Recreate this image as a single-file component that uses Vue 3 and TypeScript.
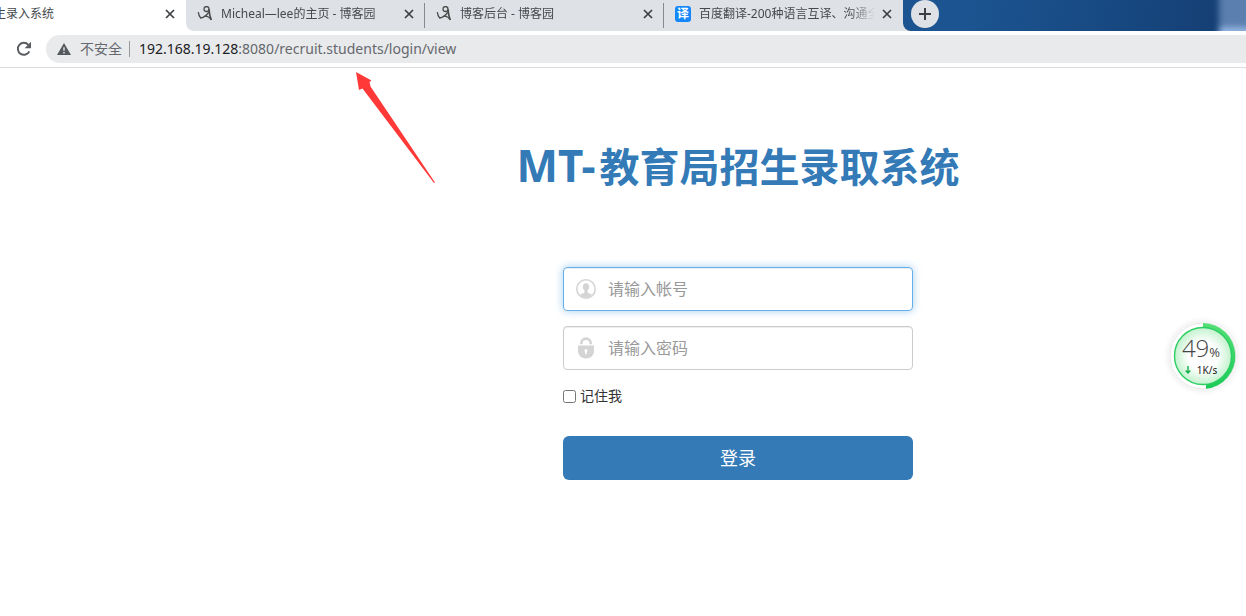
<script setup lang="ts">
import { ref } from 'vue'

interface Tab {
  title: string
  icon: 'blog' | 'translate'
}

const tabs: Tab[] = [
  { title: 'Micheal—lee的主页 - 博客园', icon: 'blog' },
  { title: '博客后台 - 博客园', icon: 'blog' },
  { title: '百度翻译-200种语言互译、沟通全', icon: 'translate' },
]

const account = ref('')
const password = ref('')
const remember = ref(false)
</script>

<template>
  <div class="window">
    <header class="browser">
      <div class="strip">
        <div class="tab active">
          <span class="active-title">生录入系统</span>
          <button class="close" type="button" aria-label="关闭">
            <svg viewBox="0 0 10 10" width="10" height="10"><path d="M1 1l8 8M9 1l-8 8" stroke="#3c4043" stroke-width="1.7" /></svg>
          </button>
        </div>
        <div class="inactive-tabs">
          <div v-for="tab in tabs" :key="tab.title" class="tab">
            <svg v-if="tab.icon === 'blog'" class="favicon" viewBox="0 0 16 16" width="16" height="16" fill="none" stroke="#4a4a4a">
              <circle cx="9.500" cy="3" r="2.500" stroke-width="1.300" />
              <path d="M1.300 6.200c.3 2.500 1 4.500 2.400 5.800 3.200-.6 6-2.800 8.300-6.200" stroke-width="1.300" />
              <path d="M12 3.200c.2 4 1 7.500 2.300 10.800" stroke-width="1.700" />
              <path d="M7.500 10.300c2.500-.6 4.500.4 6.500 3.200" stroke-width="1.100" />
            </svg>
            <span v-else class="translate">译</span>
            <span class="tab-title">{{ tab.title }}</span>
            <button class="close" type="button" aria-label="关闭">
              <svg viewBox="0 0 10 10" width="10" height="10"><path d="M1 1l8 8M9 1l-8 8" stroke="#3c4043" stroke-width="1.7" /></svg>
            </button>
          </div>
        </div>
        <div class="desk">
          <button class="new-tab" type="button" aria-label="新标签页">
            <svg viewBox="0 0 12 12" width="12" height="12"><path d="M6 0v12M0 6h12" stroke="#3c4043" stroke-width="2" /></svg>
          </button>
        </div>
        <span class="glass"></span>
      </div>
      <div class="toolbar">
        <button class="reload" type="button" aria-label="重新加载">
          <svg viewBox="0 0 16 16" width="16" height="16">
            <path d="M13.300 10.300A6 6 0 1 1 12.400 3.900" fill="none" stroke="#5a5d61" stroke-width="2" />
            <path d="M15 .8v6.400H8.600z" fill="#5a5d61" />
          </svg>
        </button>
        <div class="address">
          <svg class="warning" viewBox="0 0 14 12" width="14" height="12">
            <path d="M7 0l7 12H0z" fill="#55585c" />
            <path d="M7 4.200v3.600M7 8.900v1.500" stroke="#e9eaec" stroke-width="1.400" />
          </svg>
          <span class="insecure">不安全</span>
          <span class="divider"></span>
          <span class="url"><b>192.168.19.128</b>:8080/recruit.students/login/view</span>
        </div>
      </div>
    </header>

    <main class="page">
      <h1><span class="latin">MT-</span>教育局招生录取系统</h1>
      <form class="login" @submit.prevent>
        <label class="field focused">
          <svg viewBox="0 0 20 20" width="20" height="20">
            <circle cx="10" cy="10" r="9.200" fill="none" stroke="#d4d4d4" stroke-width="1.600" />
            <path d="M10 4.200c-2 0-3.200 1.400-3.200 3.400 0 1.800.7 3 1.600 3.800v2c-.8 1-3 1.200-4.500 2.300A8.500 8.500 0 0 0 10 18.500a8.500 8.500 0 0 0 6.100-2.800c-1.500-1.100-3.700-1.300-4.500-2.300v-2c.9-.8 1.600-2 1.600-3.800 0-2-1.200-3.400-3.200-3.400z" fill="#d4d4d4" />
          </svg>
          <input v-model="account" type="text" placeholder="请输入帐号" aria-label="帐号" />
        </label>
        <label class="field">
          <svg viewBox="0 0 20 22" width="20" height="22">
            <path d="M5.300 7.300V6.300a4.700 4.700 0 0 1 9.400 0v1" fill="none" stroke="#d4d4d4" stroke-width="2.600" />
            <path d="M2 8.500h16V14c0 4.500-3.500 7.500-8 7.500S2 18.500 2 14z" fill="#d4d4d4" />
            <path d="M10 12a1.700 1.700 0 0 0-.8 3.100v2.100h1.600v-2.100a1.700 1.700 0 0 0-.8-3.100z" fill="#fff" />
          </svg>
          <input v-model="password" type="password" placeholder="请输入密码" aria-label="密码" />
        </label>
        <label class="remember"><input v-model="remember" type="checkbox" />记住我</label>
        <button class="submit" type="submit">登录</button>
      </form>
    </main>

    <svg class="arrow" viewBox="0 0 80 112" width="80" height="112" aria-hidden="true">
      <path d="M0 0l15.500 8.500-2 1.500 1 4.500L79 110.500l-1 .5L6.500 16.500 3 18z" fill="#ff3838" />
    </svg>

    <aside class="monitor">
      <svg viewBox="0 0 68 68" width="68" height="68" aria-hidden="true">
        <defs>
          <radialGradient id="glow">
            <stop offset="0.500" stop-color="#fff" />
            <stop offset="1" stop-color="#c3f2cd" />
          </radialGradient>
          <linearGradient id="ring" x1="0" y1="0" x2="0" y2="1">
            <stop offset="0" stop-color="#54df76" />
            <stop offset="1" stop-color="#1acb58" />
          </linearGradient>
        </defs>
        <circle cx="34" cy="34" r="33" fill="#fff" stroke="#e5e5e5" />
        <path d="M34 1a33 33 0 0 1 3 65.800v-5A28 28 0 0 0 34 6z" fill="url(#ring)" />
        <circle cx="34" cy="34" r="28.500" fill="url(#glow)" stroke="#2bce62" stroke-width="1.400" />
      </svg>
      <div class="readout">
        <div class="percent">49<small>%</small></div>
        <div class="speed">
          <svg viewBox="0 0 6 8" width="6" height="8"><path d="M3 0v7M.7 4.500L3 7l2.300-2.500" fill="none" stroke="#18b04c" stroke-width="1.400" /></svg>
          1K/s
        </div>
      </div>
    </aside>
  </div>
</template>

<style>
body {
  margin: 0;
  background: #fff;
}
</style>

<style scoped>
.window {
  position: relative;
  min-height: 100vh;
  overflow: hidden;
  color: #333;
  font-family: "Noto Sans", "Noto Sans CJK SC", sans-serif;
}
.window * {
  box-sizing: border-box;
}
button {
  display: flex;
  align-items: center;
  justify-content: center;
  padding: 0;
  border: 0;
  background: none;
  font-family: inherit;
}
svg {
  display: block;
  flex: none;
}
.strip {
  position: relative;
  display: flex;
  height: 31px;
  overflow: hidden;
  background: #dee1e6;
}
.tab {
  display: flex;
  align-items: center;
  width: 239px;
  height: 28px;
  padding: 0 11px;
  color: #45484c;
  font-size: 12px;
  line-height: 20px;
}
.tab.active {
  width: 186px;
  height: 31px;
  padding: 0 11px 3px 0;
  justify-content: space-between;
  background: #fff;
}
.active-title {
  display: flex;
  justify-content: flex-end;
  width: 54px;
  white-space: nowrap;
}
.inactive-tabs {
  display: flex;
  height: 31px;
  background: #dee1e6;
  border-radius: 0 0 0 8px;
  box-shadow: -8px 0 0 #fff;
}
.inactive-tabs .tab:not(:last-child) {
  background: linear-gradient(#85898e, #85898e) 100% 100% / 1px 25px no-repeat;
}
.favicon {
  margin-right: 8px;
}
.translate {
  flex: none;
  width: 16px;
  height: 16px;
  margin-right: 8px;
  border-radius: 3px;
  background: #1487fa;
  color: #fff;
  font-size: 12px;
  font-weight: 700;
  line-height: 15px;
  text-align: center;
}
.tab-title {
  flex: 1;
  min-width: 0;
  margin-right: 8px;
  white-space: nowrap;
  mask-image: linear-gradient(to right, #000 150px, transparent 176px);
}
.desk {
  flex: 1;
  padding-left: 8px;
  border-radius: 0 0 0 8px;
  background: linear-gradient(100deg, #1b5490 20%, #154076 90%);
}
.new-tab {
  width: 28px;
  height: 28px;
  border-radius: 50%;
  background: #dee1e6;
}
.glass {
  position: absolute;
  top: -8px;
  right: -8px;
  width: 35px;
  height: 44px;
  background: linear-gradient(#5b7faf 75%, #a5c8f0 90%);
  filter: blur(3px);
}
.toolbar {
  display: flex;
  align-items: center;
  height: 37px;
  padding-left: 16px;
  border-bottom: 1px solid #dadcde;
  background: #fff;
}
.reload {
  width: 16px;
  height: 16px;
}
.address {
  display: flex;
  flex: 1;
  align-items: center;
  height: 28px;
  margin-left: 14px;
  padding-left: 11px;
  border-radius: 14px 0 0 14px;
  background: #e9eaec;
  color: #65686c;
  font-size: 14px;
  line-height: 28px;
  white-space: nowrap;
}
.insecure {
  margin-left: 9px;
}
.divider {
  width: 1px;
  height: 16px;
  margin: 0 9px 0 7px;
  background: #96999d;
}
.url b {
  color: #202124;
  font-weight: 400;
}
.page {
  display: flex;
  flex-direction: column;
  align-items: center;
  padding: 67px 0 40px 230px;
}
h1 {
  margin: 0;
  color: #337ab7;
  font-size: 40px;
  font-weight: 700;
  line-height: 60px;
  white-space: nowrap;
}
.latin {
  margin-right: 4px;
  font-size: 44px;
}
.login {
  display: flex;
  flex-direction: column;
  width: 350px;
  margin-top: 70px;
}
.field {
  display: flex;
  align-items: center;
  height: 44px;
  margin-bottom: 15px;
  padding-left: 12px;
  border: 1px solid #ccc;
  border-radius: 4px;
  box-shadow: inset 0 1px 1px rgba(0, 0, 0, 0.075);
}
.field.focused {
  border-color: #66afe9;
  box-shadow: inset 0 1px 1px rgba(0, 0, 0, 0.075), 0 0 8px rgba(102, 175, 233, 0.6);
}
.field input {
  flex: 1;
  min-width: 0;
  height: 40px;
  padding: 0 12px;
  border: 0;
  outline: 0;
  background: transparent;
  color: #555;
  font-family: inherit;
  font-size: 16px;
}
.field input::placeholder {
  color: #999;
}
.remember {
  display: flex;
  align-items: center;
  gap: 4px;
  font-size: 14px;
  line-height: 22px;
}
.remember input {
  width: 13px;
  height: 13px;
  margin: 0;
}
.submit {
  height: 44px;
  margin-top: 29px;
  padding-bottom: 2px;
  border-radius: 6px;
  background: #337ab7;
  color: #fff;
  font-size: 18px;
}
.arrow {
  position: absolute;
  top: 72px;
  left: 356px;
}
.monitor {
  position: absolute;
  top: 322px;
  right: 9px;
  width: 68px;
  height: 68px;
  border-radius: 50%;
  box-shadow: 0 0 6px rgba(0, 0, 0, 0.12);
}
.readout {
  position: absolute;
  inset: 14px 4px 0 0;
  color: #444;
}
.percent {
  display: flex;
  align-items: baseline;
  justify-content: center;
  font-family: "Open Sans", sans-serif;
  font-size: 24px;
  font-weight: 300;
  line-height: 24px;
}
.percent small {
  font-size: 13px;
  font-weight: 400;
}
.speed {
  display: flex;
  align-items: center;
  justify-content: center;
  gap: 6px;
  color: #222;
  font-size: 10px;
  line-height: 12px;
}
</style>
